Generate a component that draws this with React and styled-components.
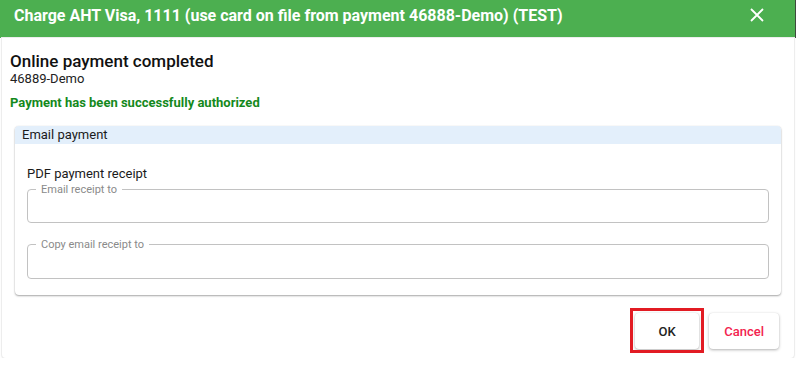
import styled, { createGlobalStyle } from "styled-components";

const GlobalStyle = createGlobalStyle`
  body {
    margin: 0;
    background: #ffffff;
    font-family: Roboto, "Liberation Sans", sans-serif;
  }
`;

function Dialog() {
  return (
    <Container>
      <Header>
        <Title>Charge AHT Visa, 1111 (use card on file from payment 46888-Demo) (TEST)</Title>
        <CloseButton aria-label="close">
          <svg width="14" height="14" viewBox="0 0 14 14">
            <path d="M1 1 L13 13 M13 1 L1 13" stroke="#fff" strokeWidth="1.8" fill="none" />
          </svg>
        </CloseButton>
      </Header>
      <Surface>
        <Heading>Online payment completed</Heading>
        <SubHeading>46889-Demo</SubHeading>
        <Success>Payment has been successfully authorized</Success>
        <Card>
          <CardHeader>Email payment</CardHeader>
          <CardBody>
            <SectionLabel>PDF payment receipt</SectionLabel>
            <Field>
              <legend>Email receipt to</legend>
            </Field>
            <Field>
              <legend>Copy email receipt to</legend>
            </Field>
          </CardBody>
        </Card>
        <Footer>
          <Button $focused>OK</Button>
          <Button $color="#f2234f">Cancel</Button>
        </Footer>
      </Surface>
    </Container>
  );
}

const Container = styled.div`
  width: 796px;
  display: flex;
  flex-direction: column;
`;

const Header = styled.div`
  height: 38px;
  background: #4caf50;
  display: flex;
  align-items: center;
  justify-content: space-between;
  padding: 0 31px 0 14px;
  box-sizing: border-box;
  border-right: 1px solid #3d4a3d;
`;

const Title = styled.div`
  color: #ffffff;
  font-size: 16px;
  font-weight: 700;
  line-height: 20px;
  margin-top: -7px;
`;

const CloseButton = styled.div`
  display: flex;
  margin-top: -8px;
`;

const Surface = styled.div`
  margin: 0 2px;
  padding: 13px 8px 9px;
  background: #ffffff;
  border-radius: 0 0 4px 4px;
  box-shadow: 0 0 0 1px #ededed, 0 1px 2px rgba(0, 0, 0, 0.18);
  display: flex;
  flex-direction: column;
`;

const Heading = styled.div`
  font-size: 17px;
  font-weight: 500;
  line-height: 20px;
  color: #111;
`;

const SubHeading = styled.div`
  font-size: 13px;
  line-height: 15px;
  color: #222;
`;

const Success = styled.div`
  margin-top: 9px;
  font-size: 13px;
  font-weight: 700;
  line-height: 15px;
  color: #14891c;
`;

const Card = styled.div`
  margin: 16px 5px 0;
  border-radius: 4px;
  background: #ffffff;
  box-shadow: 0 1px 2px rgba(0, 0, 0, 0.35), 0 0 1px rgba(0, 0, 0, 0.12);
  overflow: hidden;
`;

const CardHeader = styled.div`
  background: #e3effb;
  height: 18px;
  line-height: 18px;
  padding-left: 7px;
  font-size: 13px;
  color: #1b1b1b;
`;

const CardBody = styled.div`
  padding: 22px 12px 16px;
  display: flex;
  flex-direction: column;
  gap: 15px;
`;

const SectionLabel = styled.div`
  font-size: 13px;
  line-height: 16px;
  color: #1b1b1b;
  margin-bottom: -14px;
`;

const Field = styled.fieldset`
  margin: 0;
  height: 40px;
  box-sizing: border-box;
  padding: 0 8px;
  border: 1px solid #c2c2c2;
  border-radius: 4px;

  legend {
    font-size: 11px;
    line-height: 13px;
    color: #8a8a8a;
    padding: 0 5px;
    margin-left: 0;
  }

  & + & {
    height: 41px;
  }
`;

const Footer = styled.div`
  display: flex;
  justify-content: flex-end;
  gap: 10px;
  padding: 18px 7px 0;
`;

const Button = styled.button`
  position: relative;
  height: 36px;
  min-width: 64px;
  padding: 0 15px;
  border: none;
  border-radius: 4px;
  background: #ffffff;
  font-family: Roboto, "Liberation Sans", sans-serif;
  font-size: 13px;
  font-weight: 500;
  color: ${(p) => p.$color || "#222"};
  box-shadow: 0 1px 3px rgba(0, 0, 0, 0.3), 0 0 1px rgba(0, 0, 0, 0.1);

  &::after {
    content: "";
    display: ${(p) => (p.$focused ? "block" : "none")};
    position: absolute;
    inset: -5px -5px -4px -5px;
    border: 3px solid #e21b23;
  }
`;

export default function App() {
  return (
    <>
      <GlobalStyle />
      <Dialog />
    </>
  );
}
